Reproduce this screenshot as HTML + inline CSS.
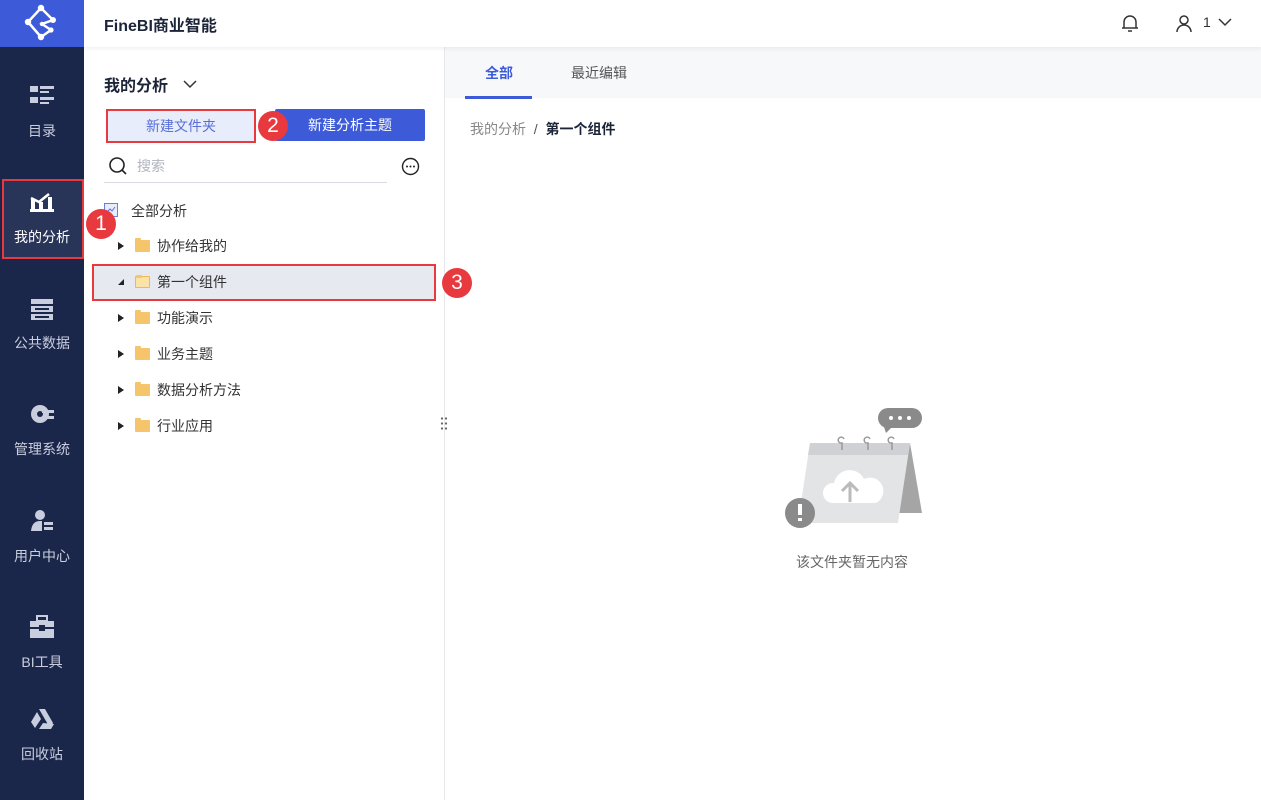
<!DOCTYPE html>
<html><head><meta charset="utf-8"><style>
*{margin:0;padding:0;box-sizing:border-box}
body{width:1261px;height:800px;position:relative;overflow:hidden;background:#fff;font-family:"Liberation Sans","Noto Sans CJK SC",sans-serif;}
.abs{position:absolute}
.side{left:0;top:0;width:84px;height:800px;background:#1b264b}
.logo{left:0;top:0;width:84px;height:47px;background:#3d5bd9}
.item{position:absolute;left:0;width:84px;text-align:center;color:#c9cede;font-size:14px}
.top{left:84px;top:0;width:1177px;height:47px;background:#fff;box-shadow:0 2px 4px rgba(0,0,0,.06);z-index:2}
.circ{position:absolute;width:30px;height:30px;border-radius:50%;background:#e8393e;color:#fff;font-size:21px;text-align:center;line-height:30px;z-index:5}
.row{position:absolute;left:92px;width:344px;height:36px;font-size:14px;color:#333;line-height:36px}
.tri{position:absolute;left:26px;top:14px;width:0;height:0;border-left:6px solid #222;border-top:4px solid transparent;border-bottom:4px solid transparent}
.fold{position:absolute;left:43px;top:12px;width:15px;height:12px;background:#f5c46b;border-radius:1px}
.fold:before{content:"";position:absolute;left:0;top:-2px;width:6px;height:3px;background:#f5c46b;border-radius:1px 1px 0 0}
.row span{position:absolute;left:65px}
</style></head><body>
<div class="abs side"></div>
<div class="abs logo"><svg width="84" height="47"><g stroke="#fff" stroke-width="2.5" fill="none"><path d="M41 8 L28 22 L41 37 M41 8 L53 20 L42 24 L51 30 L41 37"/></g><g fill="#fff"><circle cx="41" cy="8" r="3.2"/><circle cx="28" cy="22" r="3.2"/><circle cx="41" cy="37" r="3.2"/><circle cx="53" cy="20" r="3"/><circle cx="51" cy="30" r="2.6"/><circle cx="42" cy="24" r="2.2"/></g></svg></div>
<div class="abs top"><div class="abs" style="left:20px;top:12px;font-size:16px;font-weight:bold;color:#1c2438">FineBI商业智能</div>
<svg class="abs" style="left:1036px;top:13px" width="20" height="20"><path d="M4 15 L4 9 A6 6 0 0 1 16 9 L16 15 Z M2 15 H18 M8 18 H12" stroke="#333" stroke-width="1.5" fill="none"/></svg>
<svg class="abs" style="left:1090px;top:13px" width="20" height="20"><circle cx="10" cy="7" r="4" stroke="#333" stroke-width="1.5" fill="none"/><path d="M3 19 A7 7 0 0 1 17 19" stroke="#333" stroke-width="1.5" fill="none"/></svg>
<div class="abs" style="left:1119px;top:14px;font-size:14px;color:#333">1</div>
<svg class="abs" style="left:1134px;top:16px" width="14" height="12"><path d="M1 3 L7 9 L13 3" stroke="#333" stroke-width="1.5" fill="none"/></svg>
</div>
<div class="item" style="top:84px"><svg width="26" height="24"><g fill="#c9cede"><rect x="1" y="2" width="8" height="6"/><rect x="11" y="2" width="14" height="3"/><rect x="11" y="7" width="9" height="2"/><rect x="1" y="13" width="8" height="6"/><rect x="11" y="13" width="14" height="3"/><rect x="11" y="18" width="9" height="2"/></g></svg><div style="margin-top:10px">目录</div></div>
<div class="abs" style="left:2px;top:179px;width:82px;height:80px;background:#283559;border:2px solid #e8393e"></div>
<div class="item" style="top:190px;color:#fff"><svg width="26" height="24"><g fill="#fff"><rect x="1" y="19" width="24" height="3"/><rect x="2" y="9" width="4" height="10"/><rect x="10" y="12" width="4" height="7"/><rect x="19" y="7" width="4" height="12"/></g><path d="M2 8 L10 12 L20 4" stroke="#fff" stroke-width="2.5" fill="none"/></svg><div style="margin-top:10px">我的分析</div></div>
<div class="item" style="top:298px"><svg width="26" height="24"><g fill="#c9cede"><rect x="2" y="1" width="22" height="5"/><rect x="2" y="8" width="22" height="6"/><rect x="2" y="16" width="22" height="6"/></g><g fill="#1b264b"><rect x="6" y="10" width="14" height="2"/><rect x="6" y="18" width="14" height="2"/></g></svg><div style="margin-top:8px">公共数据</div></div>
<div class="item" style="top:402px"><svg width="26" height="24"><circle cx="11" cy="12" r="9" fill="#c9cede"/><circle cx="11" cy="12" r="3" fill="#1b264b"/><rect x="13" y="8" width="12" height="3" fill="#c9cede"/><rect x="13" y="14" width="12" height="3" fill="#c9cede"/></svg><div style="margin-top:10px">管理系统</div></div>
<div class="item" style="top:509px"><svg width="26" height="24"><circle cx="11" cy="6" r="5" fill="#c9cede"/><path d="M2 22 Q3 12 11 12 L13 12 L13 22 Z" fill="#c9cede"/><rect x="15" y="13" width="9" height="3" fill="#c9cede"/><rect x="15" y="18" width="9" height="3" fill="#c9cede"/></svg><div style="margin-top:10px">用户中心</div></div>
<div class="item" style="top:615px"><svg width="26" height="24"><rect x="8" y="1" width="10" height="5" fill="none" stroke="#c9cede" stroke-width="2"/><rect x="1" y="6" width="24" height="17" fill="#c9cede"/><rect x="1" y="12" width="24" height="2" fill="#1b264b"/><rect x="10" y="10" width="6" height="6" fill="#1b264b"/></svg><div style="margin-top:10px">BI工具</div></div>
<div class="item" style="top:707px"><svg width="26" height="24"><path d="M10 2 L16 2 L24 16 L21 21 Z M8 5 L12 12 L6 21 L2 15 Z M10 22 L14 16 L25 17 L22 22 Z" fill="#c9cede"/></svg><div style="margin-top:10px">回收站</div></div>
<div class="abs" style="left:444px;top:47px;width:1px;height:753px;background:#e5e7eb"></div>
<div class="abs" style="left:104px;top:72px;font-size:16px;font-weight:bold;color:#1c2438">我的分析</div>
<svg class="abs" style="left:183px;top:78px" width="14" height="12"><path d="M1 3 L7 9 L13 3" stroke="#333" stroke-width="1.5" fill="none"/></svg>
<div class="abs" style="left:106px;top:109px;width:150px;height:34px;background:#e8edfb;border:2px solid #e8393e;color:#5a6fd8;font-size:14px;text-align:center;line-height:30px">新建文件夹</div>
<div class="abs" style="left:275px;top:109px;width:150px;height:32px;background:#3d5bd9;border-radius:2px;color:#fff;font-size:14px;text-align:center;line-height:32px">新建分析主题</div>
<svg class="abs" style="left:108px;top:156px" width="20" height="20"><circle cx="9" cy="9" r="7" stroke="#222" stroke-width="1.6" fill="none"/><path d="M14 14 L18 18" stroke="#222" stroke-width="1.6"/></svg>
<div class="abs" style="left:137px;top:156px;font-size:14px;color:#b0b4bd">搜索</div>
<div class="abs" style="left:104px;top:182px;width:283px;height:1px;background:#d8dbe0"></div>
<svg class="abs" style="left:401px;top:157px" width="19" height="19"><circle cx="9.5" cy="9.5" r="8" stroke="#222" stroke-width="1.4" fill="none"/><circle cx="6" cy="9.5" r="1" fill="#222"/><circle cx="9.5" cy="9.5" r="1" fill="#222"/><circle cx="13" cy="9.5" r="1" fill="#222"/></svg>
<svg class="abs" style="left:104px;top:203px" width="14" height="14"><rect x="0.5" y="0.5" width="13" height="13" fill="#e8edfb" stroke="#6b7fd8"/><path d="M3 9 L6 6 L8 8 L11 4" stroke="#5a6fd8" fill="none"/></svg>
<div class="abs" style="left:131px;top:201px;font-size:14px;color:#333">全部分析</div>
<div class="row" style="top:228px"><div class="tri"></div><div class="fold"></div><span>协作给我的</span></div>
<div class="row" style="top:264px;height:37px;background:#e6e9f0;border:2px solid #e8393e;line-height:33px"><div style="position:absolute;left:24px;top:13px;width:0;height:0;border-right:6px solid #222;border-top:6px solid transparent"></div><div class="fold" style="left:41px;top:10px;background:#fbe3a8;border:1px solid #f0b94f"></div><span style="left:63px">第一个组件</span></div>
<div class="row" style="top:300px"><div class="tri"></div><div class="fold"></div><span>功能演示</span></div>
<div class="row" style="top:336px"><div class="tri"></div><div class="fold"></div><span>业务主题</span></div>
<div class="row" style="top:372px"><div class="tri"></div><div class="fold"></div><span>数据分析方法</span></div>
<div class="row" style="top:408px"><div class="tri"></div><div class="fold"></div><span>行业应用</span></div>
<div class="abs" style="left:440px;top:416px;width:8px;height:16px;background:radial-gradient(circle,#666 1px,transparent 1.3px) 0 0/4px 5px"></div>
<div class="circ" style="left:86px;top:209px">1</div>
<div class="circ" style="left:258px;top:111px">2</div>
<div class="circ" style="left:442px;top:268px">3</div>
<div class="abs" style="left:445px;top:47px;width:816px;height:51px;background:#f7f8fa"></div>
<div class="abs" style="left:485px;top:63px;font-size:14px;color:#3d5bd9;font-weight:bold">全部</div>
<div class="abs" style="left:465px;top:96px;width:67px;height:3px;background:#3d5bd9"></div>
<div class="abs" style="left:571px;top:63px;font-size:14px;color:#555">最近编辑</div>
<div class="abs" style="left:470px;top:119px;font-size:14px;color:#888">我的分析 &nbsp;<span style="color:#555">/</span>&nbsp; <b style="color:#1c2438">第一个组件</b></div>
<svg class="abs" style="left:780px;top:405px" width="145" height="125">
<rect x="98" y="3" width="44" height="20" rx="10" fill="#8a8a8a"/><path d="M104 22 L106 28 L112 22Z" fill="#8a8a8a"/>
<circle cx="111" cy="13" r="2" fill="#fff"/><circle cx="120" cy="13" r="2" fill="#fff"/><circle cx="129" cy="13" r="2" fill="#fff"/>
<path d="M130 38 L142 108 L118 108 Z" fill="#a5a5a5"/>
<path d="M30 38 L130 38 L118 118 L18 118 Z" fill="#e3e4e6"/>
<path d="M30 38 L130 38 L128 50 L28 50 Z" fill="#d0d1d4"/>
<g stroke="#999" stroke-width="1.5" fill="none"><path d="M62 45 V38 A3 3 0 1 1 64 34"/><path d="M88 45 V38 A3 3 0 1 1 90 34"/><path d="M112 45 V38 A3 3 0 1 1 114 34"/></g>
<path d="M52 98 A10 10 0 0 1 54 78 A16 16 0 0 1 84 74 A12 12 0 0 1 96 98 Z" fill="#fff"/>
<path d="M70 97 V78 M62 86 L70 78 L78 86" stroke="#bbb" stroke-width="3" fill="none"/>
<circle cx="20" cy="108" r="15" fill="#8a8a8a"/><rect x="18" y="99" width="4" height="11" fill="#fff"/><rect x="18" y="113" width="4" height="3" fill="#fff"/>
</svg>
<div class="abs" style="left:796px;top:552px;font-size:14px;color:#666">该文件夹暂无内容</div>
</body></html>
